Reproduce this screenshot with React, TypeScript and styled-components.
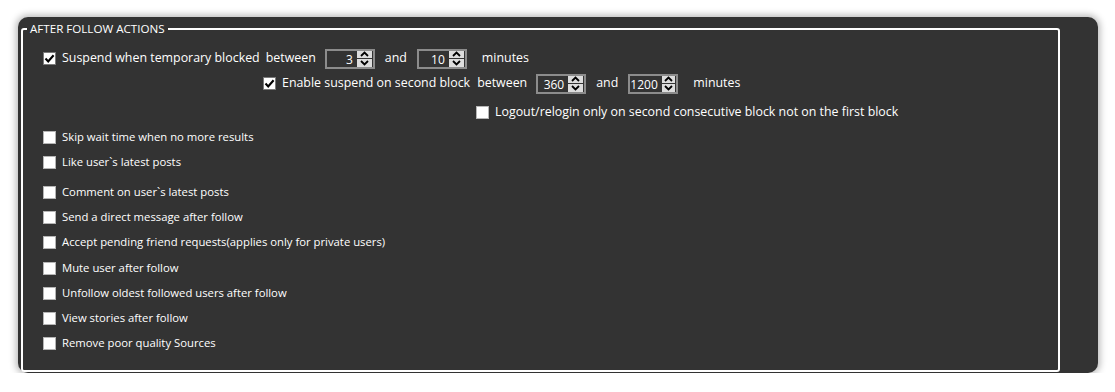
import styled, { createGlobalStyle } from "styled-components";

const GlobalStyle = createGlobalStyle`
    body {
        margin: 0;
        background-color: #ffffff;
        font-family: "Open Sans", "Noto Sans", sans-serif;
        font-size: 12px;
        color: #ffffff;
    }
`;

const Panel = styled.div`
    margin: 17px 0 0 18px;
    width: 1080px;
    height: 356px;
    box-sizing: border-box;
    padding: 5px 38px 1px 3px;
    background-color: #333333;
    border-radius: 10px;
    box-shadow: 0 0 7px 2px rgba(0, 0, 0, 0.28);
`;

const GroupBox = styled.fieldset`
    margin: 0;
    padding: 0;
    height: 100%;
    box-sizing: border-box;
    border: 2px solid #ffffff;
    border-radius: 3px;
    min-width: 0;
`;

const Legend = styled.legend`
    margin-left: 4px;
    padding: 0 3px;
    font-size: 11.6px;
    line-height: 14px;
    color: #ffffff;
`;

const Body = styled.div`
    padding-top: 10px;
    display: flex;
    flex-direction: column;
`;

const Row = styled.div<{ $indent: number; $gap?: number; $size: number }>`
    height: 25px;
    display: flex;
    align-items: center;
    padding-left: ${(p) => p.$indent}px;
    margin-top: ${(p) => p.$gap ?? 0}px;
    font-size: ${(p) => p.$size}px;
`;

const Box = styled.span<{ $checked?: boolean }>`
    width: 13px;
    height: 13px;
    box-sizing: border-box;
    flex-shrink: 0;
    display: flex;
    align-items: center;
    justify-content: center;
    background-color: #ffffff;
    border: 1px solid ${(p) => (p.$checked ? "#7a7a7a" : "#b5b5b5")};
    svg {
        width: 11px;
        height: 11px;
    }
`;

const Label = styled.span`
    margin-left: 6px;
    white-space: nowrap;
    line-height: 16px;
    margin-top: -2px;
`;

const Text = styled.span<{ $left: number }>`
    margin-left: ${(p) => p.$left}px;
    white-space: nowrap;
    line-height: 16px;
    margin-top: -2px;
`;

const Spin = styled.div<{ $left: number }>`
    margin-left: ${(p) => p.$left}px;
    width: 50px;
    height: 20px;
    box-sizing: border-box;
    border: 2px solid #8c8c8c;
    display: flex;
    align-items: stretch;
    background-color: #333333;
    font-size: 12px;
`;

const SpinValue = styled.span`
    flex: 1;
    text-align: right;
    padding-right: 4px;
    line-height: 17px;
`;

const SpinButtons = styled.div`
    width: 15px;
    margin-right: 1px;
    display: flex;
    flex-direction: column;
    gap: 1px;
    background-color: #333333;
`;

const SpinButton = styled.div`
    flex: 1;
    background-color: #dddddd;
    display: flex;
    align-items: center;
    justify-content: center;
    svg {
        width: 9px;
        height: 6px;
    }
`;

function Check({ checked, label }: { checked?: boolean; label: string }) {
    return (
        <>
            <Box $checked={checked}>
                {checked ? (
                    <svg viewBox="0 0 11 11">
                        <polyline points="1.5,5.5 4.2,8.4 9.6,2.2" fill="none" stroke="#000" strokeWidth="2.1" />
                    </svg>
                ) : null}
            </Box>
            <Label>{label}</Label>
        </>
    );
}

function NumberBox({ value, left }: { value: number; left: number }) {
    return (
        <Spin $left={left}>
            <SpinValue>{value}</SpinValue>
            <SpinButtons>
                <SpinButton>
                    <svg viewBox="0 0 9 6">
                        <polyline points="1,5 4.5,1.5 8,5" fill="none" stroke="#000" strokeWidth="1.8" />
                    </svg>
                </SpinButton>
                <SpinButton>
                    <svg viewBox="0 0 9 6">
                        <polyline points="1,1 4.5,4.5 8,1" fill="none" stroke="#000" strokeWidth="1.8" />
                    </svg>
                </SpinButton>
            </SpinButtons>
        </Spin>
    );
}

const options = [
    { label: "Skip wait time when no more results", gap: 0 },
    { label: "Like user`s latest posts", gap: 0 },
    { label: "Comment on user`s latest posts", gap: 5 },
    { label: "Send a direct message after follow", gap: 0 },
    { label: "Accept pending friend requests(applies only for private users)", gap: 0 },
    { label: "Mute user after follow", gap: 1 },
    { label: "Unfollow oldest followed users after follow", gap: 0 },
    { label: "View stories after follow", gap: 0 },
    { label: "Remove poor quality Sources", gap: 0 },
];

export default function App() {
    return (
        <>
            <GlobalStyle />
            <Panel>
                <GroupBox>
                    <Legend>AFTER FOLLOW ACTIONS</Legend>
                    <Body>
                        <Row $indent={20} $size={12.4}>
                            <Check checked label="Suspend when temporary blocked" />
                            <Text $left={6}>between</Text>
                            <NumberBox value={3} left={9} />
                            <Text $left={10}>and</Text>
                            <NumberBox value={10} left={10} />
                            <Text $left={15}>minutes</Text>
                        </Row>
                        <Row $indent={240} $size={12.4}>
                            <Check checked label="Enable suspend on second block" />
                            <Text $left={7}>between</Text>
                            <NumberBox value={360} left={9} />
                            <Text $left={10}>and</Text>
                            <NumberBox value={1200} left={10} />
                            <Text $left={15}>minutes</Text>
                        </Row>
                        <Row $indent={453} $gap={4} $size={12.4}>
                            <Check label="Logout/relogin only on second consecutive block not on the first block" />
                        </Row>
                        {options.map((o) => (
                            <Row key={o.label} $indent={20} $gap={o.gap} $size={11.3}>
                                <Check label={o.label} />
                            </Row>
                        ))}
                    </Body>
                </GroupBox>
            </Panel>
        </>
    );
}
